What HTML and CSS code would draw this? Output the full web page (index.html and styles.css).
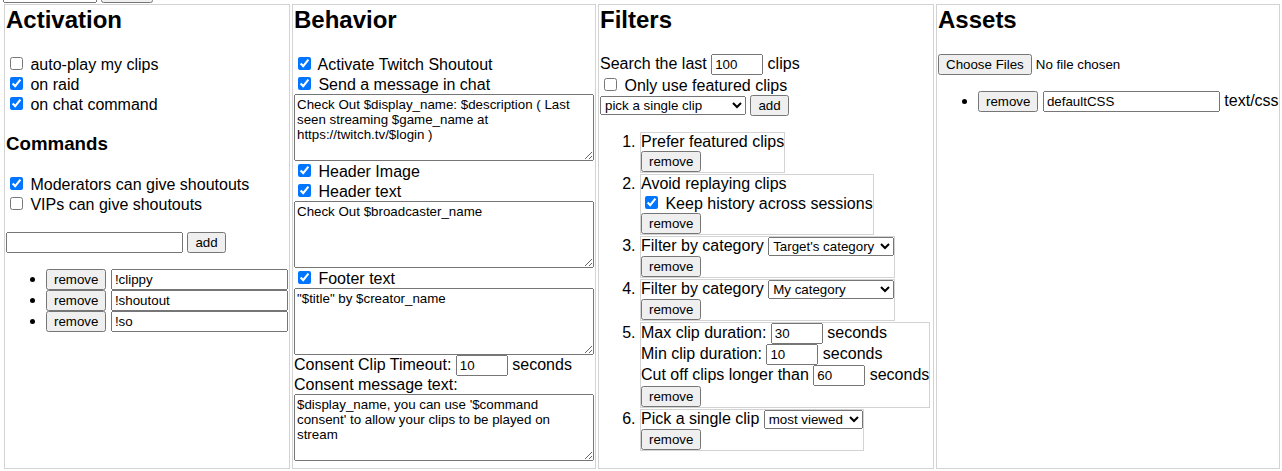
FILE: index.html
```html
<!DOCTYPE html>
<html lang="en">
<head>
<meta charset="utf-8">
<title>Shoutout settings</title>
<link rel="stylesheet" href="styles.css">
</head>
<body>
<div class="page">
  <div class="topbar"><input type="text" class="top-input"> <button class="top-btn">&nbsp;</button></div>
  <div class="columns">
    <section class="col col-activation">
      <h2>Activation</h2>
      <div class="row"><label><input type="checkbox"> auto-play my clips</label></div>
      <div class="row"><label><input type="checkbox" checked> on raid</label></div>
      <div class="row"><label><input type="checkbox" checked> on chat command</label></div>
      <h3>Commands</h3>
      <div class="row"><label><input type="checkbox" checked> Moderators can give shoutouts</label></div>
      <div class="row"><label><input type="checkbox"> VIPs can give shoutouts</label></div>
      <div class="add-row"><input type="text" class="cmd-input"> <button>add</button></div>
      <ul class="cmd-list">
        <li><button>remove</button> <input type="text" class="cmd-input" value="!clippy"></li>
        <li><button>remove</button> <input type="text" class="cmd-input" value="!shoutout"></li>
        <li><button>remove</button> <input type="text" class="cmd-input" value="!so"></li>
      </ul>
    </section>

    <section class="col col-behavior">
      <h2>Behavior</h2>
      <div class="row"><label><input type="checkbox" checked> Activate Twitch Shoutout</label></div>
      <div class="row"><label><input type="checkbox" checked> Send a message in chat</label></div>
      <textarea rows="4">Check Out $display_name: $description ( Last seen streaming $game_name at https://twitch.tv/$login )</textarea>
      <div class="row"><label><input type="checkbox" checked> Header Image</label></div>
      <div class="row"><label><input type="checkbox" checked> Header text</label></div>
      <textarea rows="4">Check Out $broadcaster_name</textarea>
      <div class="row"><label><input type="checkbox" checked> Footer text</label></div>
      <textarea rows="4">"$title" by $creator_name</textarea>
      <div class="row">Consent Clip Timeout: <input type="text" class="num" value="10"> seconds</div>
      <div class="row">Consent message text:</div>
      <textarea rows="4">$display_name, you can use '$command consent' to allow your clips to be played on stream</textarea>
    </section>

    <section class="col col-filters">
      <h2>Filters</h2>
      <div class="row">Search the last <input type="text" class="num" value="100"> clips</div>
      <div class="row"><label><input type="checkbox"> Only use featured clips</label></div>
      <div class="row"><select class="sel-type"><option>pick a single clip</option><option>prefer featured clips</option><option>avoid replaying clips</option><option>filter by category</option><option>clip duration</option></select> <button>add</button></div>
      <ol class="filters">
        <li>
          <div>Prefer featured clips</div>
          <button>remove</button>
        </li>
        <li>
          <div>Avoid replaying clips</div>
          <div><label><input type="checkbox" checked> Keep history across sessions</label></div>
          <button>remove</button>
        </li>
        <li>
          <div>Filter by category <select class="sel-cat"><option>Target's category</option><option>My category</option></select></div>
          <button>remove</button>
        </li>
        <li>
          <div>Filter by category <select class="sel-cat"><option>My category</option><option>Target's category</option></select></div>
          <button>remove</button>
        </li>
        <li>
          <div>Max clip duration: <input type="text" class="num" value="30"> seconds</div>
          <div>Min clip duration: <input type="text" class="num" value="10"> seconds</div>
          <div>Cut off clips longer than <input type="text" class="num" value="60"> seconds</div>
          <button>remove</button>
        </li>
        <li>
          <div>Pick a single clip <select class="sel-view"><option>most viewed</option><option>random</option></select></div>
          <button>remove</button>
        </li>
      </ol>
    </section>

    <section class="col col-assets">
      <h2>Assets</h2>
      <div class="row"><input type="file" multiple></div>
      <ul class="asset-list">
        <li><button>remove</button> <input type="text" class="cmd-input" value="defaultCSS"> text/css</li>
      </ul>
    </section>
  </div>
</div>
</body>
</html>
```

FILE: styles.css
```css
body {
  margin: 0;
  font-family: "Liberation Sans", Arial, sans-serif;
  font-size: 16px;
  color: #000;
  background: #fff;
}

input, button, select, textarea {
  font-family: "Liberation Sans", Arial, sans-serif;
  font-size: 13.3333px;
}

.page {
  padding-left: 3px;
}

.topbar {
  margin-top: -18px;
  white-space: nowrap;
}

.top-input {
  width: 94px;
  box-sizing: border-box;
}

.top-btn {
  width: 52px;
}

.columns {
  display: flex;
  align-items: stretch;
}

.col {
  flex: 0 0 auto;
  box-sizing: border-box;
  border: 1px solid #d3d3d3;
  margin: 1px;
  padding: 1px;
}

.col-activation { width: 286px; }
.col-behavior { width: 304px; }
.col-filters { width: 336px; }
.col-assets { width: 344px; }

h2 {
  font-size: 24px;
  margin: 0 0 19.92px;
}

h3 {
  font-size: 18.72px;
  margin: 18.72px 0 19.72px;
}

.row {
  white-space: nowrap;
}

.add-row {
  margin-top: 18px;
  white-space: nowrap;
}

.cmd-input {
  width: 177px;
  box-sizing: border-box;
}

.cmd-list, .asset-list {
  margin: 16px 0;
  padding-left: 40px;
}

.cmd-list li, .asset-list li {
  white-space: nowrap;
}

textarea {
  display: block;
  width: 300px;
  height: 67px;
  box-sizing: border-box;
}

.num {
  width: 52px;
  box-sizing: border-box;
}

.sel-type { width: 146px; }
.sel-cat { width: 126px; }
.sel-view { width: 99px; }

.filters {
  margin: 16px 0;
  padding-left: 40px;
}

.filters li {
  width: fit-content;
  white-space: nowrap;
  border: 1px solid #d3d3d3;
  margin-bottom: 1px;
}
```
